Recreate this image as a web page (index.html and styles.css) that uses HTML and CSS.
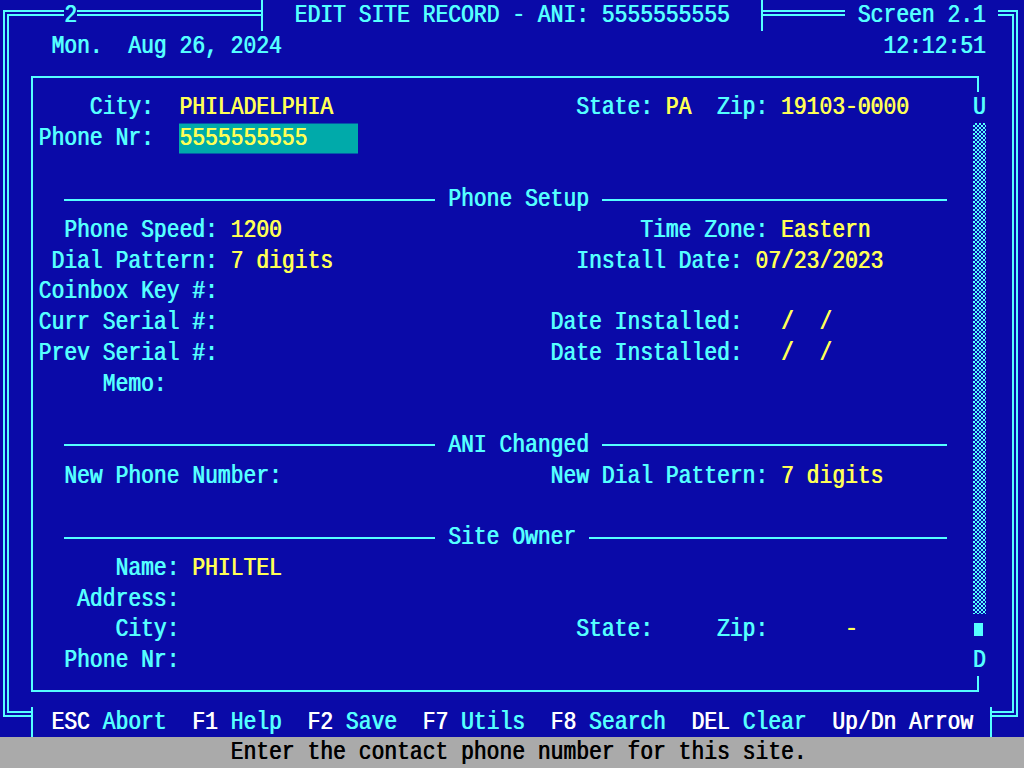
FILE: index.html
```html
<!DOCTYPE html>
<html>
<head>
<meta charset="utf-8">
<title>Edit Site Record</title>
<link rel="stylesheet" href="styles.css">
</head>
<body>
<div class="screen">
  <div class="frame">
    <div class="hdr">
      <div class="h-gap1"></div>
      <div class="h-num"><span class="tx">2</span></div>
      <div class="h-gap2"></div>
      <div class="h-title"><span class="tx">EDIT SITE RECORD - ANI: 5555555555</span></div>
      <div class="h-gap3"></div>
      <div class="h-screen"><span class="tx">Screen 2.1</span></div>
      <div class="h-gap4"></div>
    </div>
    <div class="date-row">
      <span class="tx">Mon.  Aug 26, 2024</span>
      <span class="tx">12:12:51</span>
    </div>
    <div class="panel">
      <div class="panel-body">
        <div class="ln">    City:  <span class="v">PHILADELPHIA</span>                   State: <span class="v">PA</span>  Zip: <span class="v">19103-0000</span></div>
        <div class="ln">Phone Nr:  <span class="fld">5555555555    </span></div>
        <div class="ln"></div>
        <div class="divider"><div class="rule-l"></div><span class="rule-label tx">Phone Setup</span><div class="rule-r"></div></div>
        <div class="ln">  Phone Speed: <span class="v">1200</span>                            Time Zone: <span class="v">Eastern</span></div>
        <div class="ln"> Dial Pattern: <span class="v">7 digits</span>                   Install Date: <span class="v">07/23/2023</span></div>
        <div class="ln">Coinbox Key #:</div>
        <div class="ln">Curr Serial #:                          Date Installed: <span class="v">  /  /</span></div>
        <div class="ln">Prev Serial #:                          Date Installed: <span class="v">  /  /</span></div>
        <div class="ln">     Memo:</div>
        <div class="ln"></div>
        <div class="divider"><div class="rule-l"></div><span class="rule-label tx">ANI Changed</span><div class="rule-r"></div></div>
        <div class="ln">  New Phone Number:                     New Dial Pattern: <span class="v">7 digits</span></div>
        <div class="ln"></div>
        <div class="divider"><div class="rule-l"></div><span class="rule-label tx">Site Owner</span><div class="rule-r"></div></div>
        <div class="ln">      Name: <span class="v">PHILTEL</span></div>
        <div class="ln">   Address:</div>
        <div class="ln">      City:                               State:     Zip:      <span class="v">-</span></div>
        <div class="ln">  Phone Nr:</div>
      </div>
      <div class="scroll">
        <div class="cap-top"></div>
        <div class="arrow"><span class="tx">U</span></div>
        <div class="track"></div>
        <div class="thumb-cell"><div class="thumb"></div></div>
        <div class="arrow"><span class="tx">D</span></div>
        <div class="cap-bot"></div>
      </div>
    </div>
    <div class="ftr">
      <div class="f-gap"></div>
      <div class="f-keys"><span class="tx"><span class="k">ESC</span> Abort  <span class="k">F1</span> Help  <span class="k">F2</span> Save  <span class="k">F7</span> Utils  <span class="k">F8</span> Search  <span class="k">DEL</span> Clear  <span class="k">Up/Dn Arrow</span></span></div>
    </div>
  </div>
  <div class="status"><span class="tx">Enter the contact phone number for this site.</span></div>
</div>
</body>
</html>
```
FILE: styles.css
```css
html, body {
  margin: 0;
  padding: 0;
  background: #0a0aa8;
}

body {
  font-family: "Liberation Mono", "DejaVu Sans Mono", monospace;
  font-size: 21.3333px;
  color: #55ffff;
}

.screen {
  width: 1024px;
  height: 768px;
  overflow: hidden;
  display: flex;
  flex-direction: column;
  background: #0a0aa8;
}

.tx {
  display: inline-block;
  white-space: pre;
  transform: scaleY(1.2);
  text-shadow: 0.7px 0 0 currentColor;
}

/* outer double frame */
.frame {
  box-sizing: border-box;
  flex: none;
  height: 707px;
  margin: 10px 6px 20.28px 3px;
  border: 6px double #55ffff;
}

/* header row, drawn over the top border */
.hdr {
  display: flex;
  height: 30.72px;
  line-height: 30.72px;
  margin: -16px -12px 0 -9px;
}
.h-gap1 { width: 64px; flex: none; }
.h-num { width: 12.8px; flex: none; background: #0a0aa8; }
.h-gap2 { width: 184.6px; flex: none; }
.h-title {
  box-sizing: border-box;
  width: 501.2px;
  flex: none;
  background: #0a0aa8;
  border-left: 2px solid #55ffff;
  border-right: 2px solid #55ffff;
  padding-left: 31px;
}
.h-gap3 { width: 82.2px; flex: none; }
.h-screen {
  box-sizing: border-box;
  width: 153.6px;
  flex: none;
  background: #0a0aa8;
  padding-left: 12.8px;
}
.h-gap4 { flex: 1; }

.date-row {
  display: flex;
  justify-content: space-between;
  height: 30.72px;
  line-height: 30.72px;
  padding: 0 26.4px 0 42.2px;
}

/* inner single-line panel */
.panel {
  display: flex;
  width: 954.6px;
  height: 616px;
  margin: 14.56px 0 0 22px;
}
.panel-body {
  box-sizing: border-box;
  flex: 1;
  height: 616px;
  border-top: 2px solid #55ffff;
  border-left: 2px solid #55ffff;
  border-bottom: 2px solid #55ffff;
  padding: 14.16px 0 14.16px 5.4px;
}

.ln {
  height: 30.72px;
  line-height: 30.72px;
  white-space: pre;
  transform: scaleY(1.2);
  text-shadow: 0.7px 0 0 currentColor;
}
.v { color: #ffff55; }
.fld {
  display: inline-block;
  vertical-align: top;
  height: 25.6px;
  line-height: 25.6px;
  margin-top: 2.56px;
  background: #00aaaa;
  color: #ffff55;
}

.divider {
  box-sizing: border-box;
  display: flex;
  align-items: center;
  height: 30.72px;
  line-height: 30.72px;
  width: 934.4px;
  padding: 0 25.6px;
}
.rule-l {
  width: 371.2px;
  flex: none;
  height: 2px;
  background: #55ffff;
}
.rule-label { margin: 0 12.8px; }
.rule-r {
  flex: 1;
  height: 2px;
  background: #55ffff;
}

/* scroll column */
.scroll {
  width: 12.8px;
  flex: none;
  display: flex;
  flex-direction: column;
}
.cap-top, .cap-bot {
  box-sizing: border-box;
  width: 6.2px;
  height: 16.16px;
  border-right: 2px solid #55ffff;
}
.cap-top { border-top: 2px solid #55ffff; }
.cap-bot { border-bottom: 2px solid #55ffff; }
.arrow {
  height: 30.72px;
  line-height: 30.72px;
  text-align: center;
}
.track {
  height: 491.52px;
  background-color: #0a0aa8;
  background-image: repeating-conic-gradient(#55ffff 0 25%, #0a0aa8 0 50%);
  background-size: 4px 4px;
}
.thumb-cell {
  height: 30.72px;
  display: flex;
  align-items: center;
}
.thumb {
  width: 9px;
  height: 13px;
  margin-left: 1px;
  background: #55ffff;
}

/* footer keys, drawn over the bottom border */
.ftr {
  display: flex;
  height: 30.72px;
  line-height: 30.72px;
  margin: 14.56px -12px 0 -9px;
}
.f-gap { width: 31px; flex: none; }
.f-keys {
  box-sizing: border-box;
  width: 961px;
  flex: none;
  background: #0a0aa8;
  border-left: 2px solid #55ffff;
  border-right: 2px solid #55ffff;
  padding-left: 18.2px;
  white-space: pre;
}
.k { color: #ffffff; }

.status {
  flex: none;
  height: 30.72px;
  line-height: 30.72px;
  background: #aaaaaa;
  color: #000000;
  padding-left: 230.4px;
}
```
